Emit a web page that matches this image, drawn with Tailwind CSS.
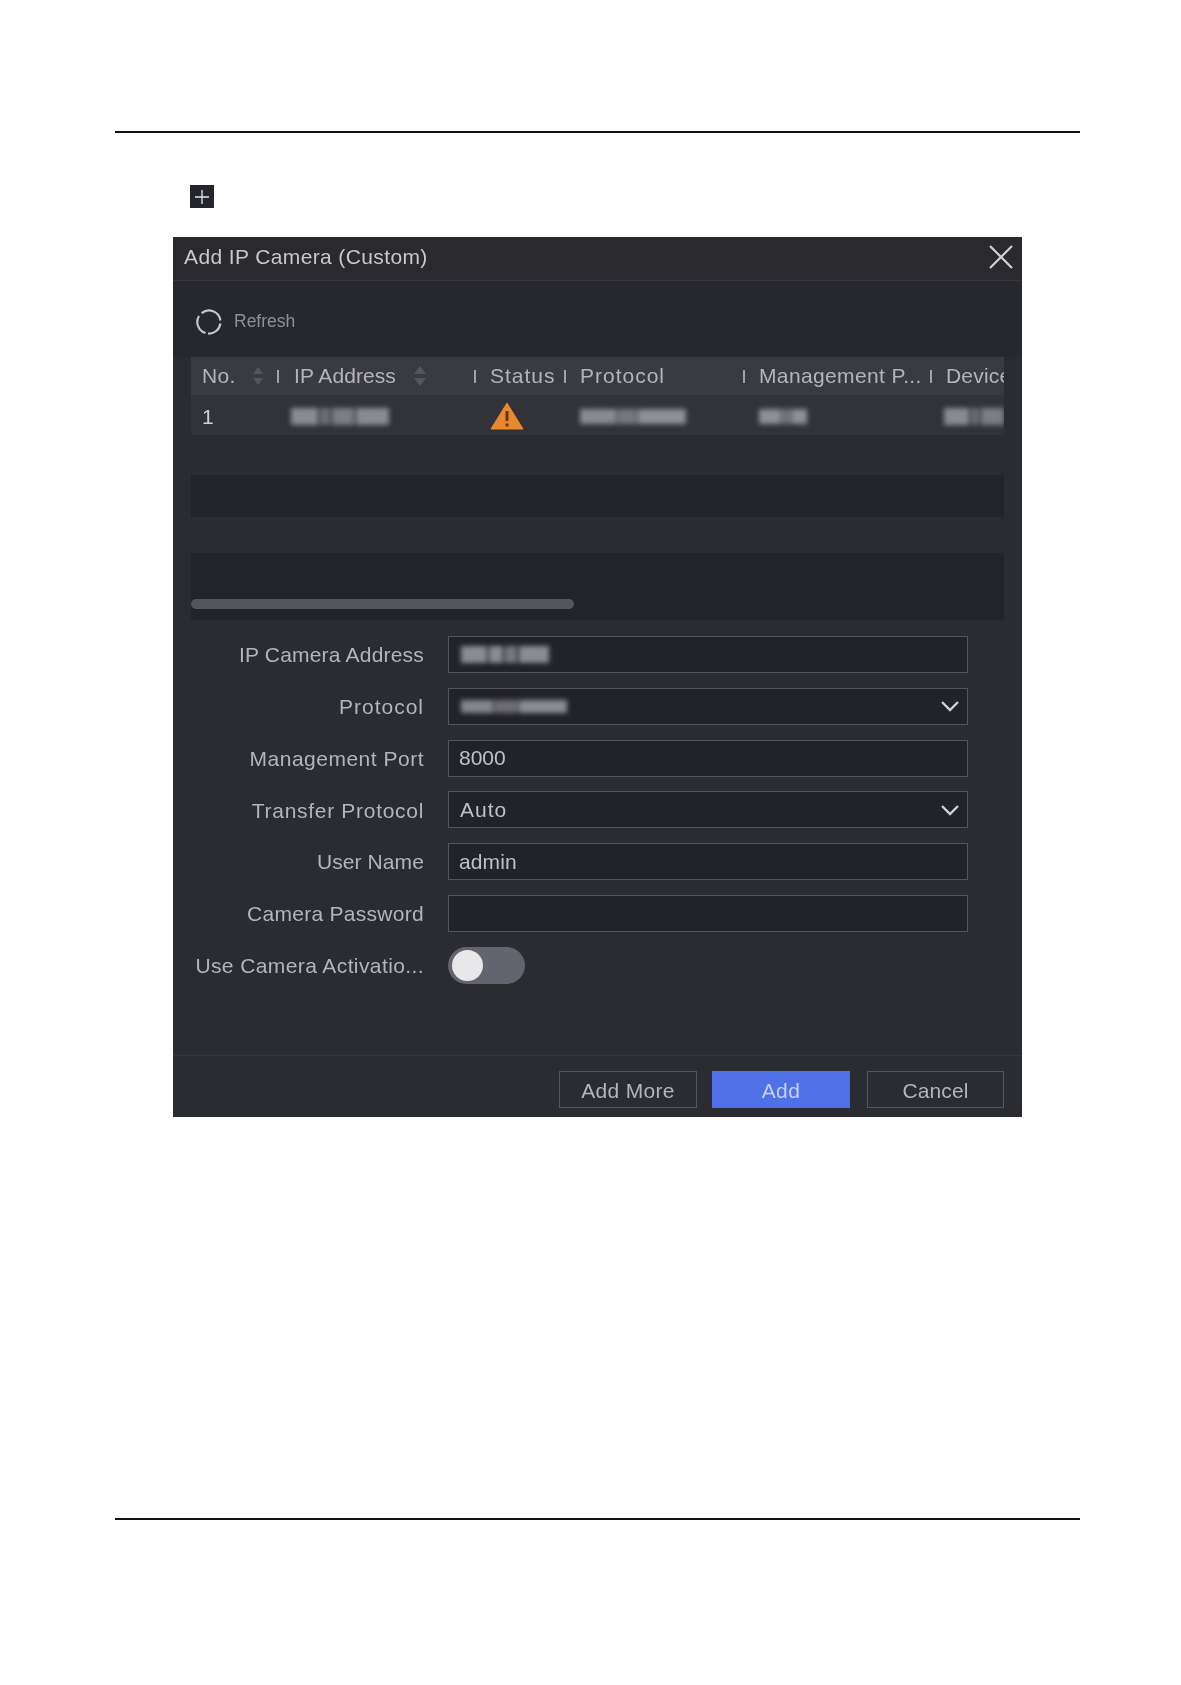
<!DOCTYPE html>
<html lang="en">
<head>
    <meta charset="UTF-8">
    <title>Add IP Camera (Custom)</title>
    <script src="https://cdn.jsdelivr.net/npm/@tailwindcss/browser@4"></script>
</head>
<body class="bg-[#fefefe] font-['Liberation_Sans',Arial,sans-serif]">
    <div class="h-[1685px] w-[1181px] overflow-hidden pt-[131px]">
        <!-- Top rule -->
        <div class="ml-[115px] h-[2px] w-[965px] bg-[#111]"></div>

        <!-- Plus icon -->
        <div class="ml-[190px] mt-[52px] flex h-[23px] w-[24px] items-center justify-center bg-[#23252d]">
            <svg width="16" height="16" viewBox="0 0 16 16" fill="none" stroke="#e8e8ea" stroke-width="1.3"><path d="M1 8h14M8 1v14"/></svg>
        </div>

        <!-- Dialog -->
        <div class="ml-[173px] mt-[29px] flex h-[880px] w-[849px] flex-col bg-[#2b2c31] text-[#b4b5b8] blur-[0.4px]">
            <div class="flex h-[44px] shrink-0 items-center justify-between border-b border-[#35363b] bg-[#29292e] pl-[11px] pr-[8px]">
                <span class="-mt-[4px] text-[21px] tracking-[0.38px] text-[#c8c9cb]">Add IP Camera (Custom)</span>
                <svg class="-mt-[4px]" width="26" height="26" viewBox="0 0 26 26" fill="none" stroke="#d0d1d3" stroke-width="2.2"><path d="M2 2l22 22M24 2L2 24"/></svg>
            </div>

            <div class="flex flex-1 flex-col">
                <!-- Refresh -->
                <div class="flex h-[76px] shrink-0 items-center bg-[#27282d] pl-[22px] pt-[5px]">
                    <svg width="28" height="28" viewBox="0 0 28 28" fill="none" stroke="#c4c5c8" stroke-width="2.2"><path d="M6.6 5.2A11.5 11.5 0 0 1 25.4 12.5"/><path d="M25.4 15.5A11.5 11.5 0 0 1 13 25.5"/><path d="M10.5 25A11.5 11.5 0 0 1 4 8"/></svg>
                    <span class="ml-[11px] text-[17.5px] text-[#8f9095]">Refresh</span>
                </div>

                <!-- Table -->
                <div class="mx-[18px] h-[263px] shrink-0 overflow-hidden text-[21px]">
                    <div class="flex h-[38px] items-center bg-[#3a3b40] text-[#b4b5b8]">
                        <div class="flex w-[86px] shrink-0 items-center pl-[11px]">
                            <span class="tracking-[0.3px]">No.</span>
                            <svg class="ml-[16px]" width="12" height="20" viewBox="0 0 12 20" fill="#55565b"><path d="M6 1l5 7H1zM6 19l5-7H1z"/></svg>
                        </div>
                        <div class="flex w-[197px] shrink-0 items-center">
                            <i class="h-[13px] w-[2px] bg-[#a0a1a5]"></i>
                            <span class="ml-[15px] tracking-[0.07px]">IP Address</span>
                            <svg class="ml-[17px]" width="14" height="22" viewBox="0 0 14 22" fill="#55565b"><path d="M7 1l6 8H1zM7 21l6-8H1z"/></svg>
                        </div>
                        <div class="flex w-[90px] shrink-0 items-center">
                            <i class="h-[13px] w-[2px] bg-[#a0a1a5]"></i>
                            <span class="ml-[14px] tracking-[1px]">Status</span>
                        </div>
                        <div class="flex w-[179px] shrink-0 items-center">
                            <i class="h-[13px] w-[2px] bg-[#a0a1a5]"></i>
                            <span class="ml-[14px] tracking-[1px]">Protocol</span>
                        </div>
                        <div class="flex w-[187px] shrink-0 items-center">
                            <i class="h-[13px] w-[2px] bg-[#a0a1a5]"></i>
                            <span class="ml-[14px] tracking-[0.37px]">Management P...</span>
                        </div>
                        <div class="flex min-w-0 flex-1 items-center overflow-hidden whitespace-nowrap">
                            <i class="h-[13px] w-[2px] shrink-0 bg-[#a0a1a5]"></i>
                            <span class="ml-[14px] tracking-[0.2px]">Device</span>
                        </div>
                    </div>
                    <div class="flex h-[40px] items-center bg-[#323339] pt-[3px]">
                        <div class="w-[86px] shrink-0 pl-[11px] text-[#d0d1d3]">1</div>
                        <div class="w-[197px] shrink-0 pl-[14px]">
                            <div class="flex h-[17px] w-[98px] gap-[2px] blur-[2.5px]">
                                <i class="w-[28px] bg-[#8a8b90]"></i><i class="w-[10px] bg-[#6d6e73]"></i><i class="w-[22px] bg-[#7d7e83]"></i><i class="w-[34px] bg-[#8a8b90]"></i>
                            </div>
                        </div>
                        <div class="-mt-[2px] w-[90px] shrink-0 pl-[16px]">
                            <svg width="34" height="28" viewBox="0 0 34 28"><path d="M17 1L33 27H1z" fill="#e8872b" stroke="#e8872b" stroke-linejoin="round"/><path d="M17 9v10" stroke="#5c3a17" stroke-width="3"/><circle cx="17" cy="23" r="1.7" fill="#5c3a17"/></svg>
                        </div>
                        <div class="w-[179px] shrink-0 pl-[16px]">
                            <div class="flex h-[15px] w-[106px] gap-[1px] blur-[2.5px]">
                                <i class="w-[36px] bg-[#8a8b90]"></i><i class="w-[20px] bg-[#77787d]"></i><i class="w-[48px] bg-[#8f9095]"></i>
                            </div>
                        </div>
                        <div class="w-[187px] shrink-0 pl-[16px]">
                            <div class="flex h-[15px] w-[48px] gap-[1px] blur-[2.5px]">
                                <i class="w-[22px] bg-[#8f9095]"></i><i class="w-[8px] bg-[#77787d]"></i><i class="w-[16px] bg-[#8f9095]"></i>
                            </div>
                        </div>
                        <div class="flex-1 pl-[14px]">
                            <div class="flex h-[17px] w-[60px] gap-[2px] blur-[2.5px]">
                                <i class="w-[26px] bg-[#8a8b90]"></i><i class="w-[8px] bg-[#6d6e73]"></i><i class="w-[24px] bg-[#7d7e83]"></i>
                            </div>
                        </div>
                    </div>
                    <div class="h-[40px]"></div>
                    <div class="h-[42px] bg-[#22232b]"></div>
                    <div class="h-[36px]"></div>
                    <div class="h-[67px] bg-[#22232b]"></div>
                </div>

                <!-- Scrollbar, drawn over the last table row -->
                <div class="relative h-0">
                    <div class="absolute left-[18px] top-[-21px] h-[10px] w-[383px] rounded-full bg-[#55555d]"></div>
                </div>

                <!-- Form -->
                <div class="mt-[16px] flex flex-col gap-[14.8px] text-[21px]">
                    <div class="flex h-[37px] items-center">
                        <label class="w-[251px] shrink-0 pt-[1px] text-right tracking-[0.2px]">IP Camera Address</label>
                        <div class="ml-[24px] flex h-full w-[520px] items-center border border-[#55565c] bg-[#22232a] pl-[12px]">
                            <div class="flex h-[17px] w-[94px] gap-[2px] blur-[2.5px]">
                                <i class="w-[26px] bg-[#8b8c91]"></i><i class="w-[14px] bg-[#8b8c91]"></i><i class="w-[12px] bg-[#77787d]"></i><i class="w-[30px] bg-[#8b8c91]"></i>
                            </div>
                        </div>
                    </div>
                    <div class="flex h-[37px] items-center">
                        <label class="w-[251px] shrink-0 pt-[1px] text-right tracking-[1px]">Protocol</label>
                        <div class="ml-[24px] flex h-full w-[520px] items-center justify-between border border-[#55565c] bg-[#22232a] pl-[12px] pr-[7px]">
                            <div class="flex h-[13px] w-[106px] gap-[1px] blur-[2.5px]">
                                <i class="w-[32px] bg-[#85868b]"></i><i class="w-[24px] bg-[#6d6e73]"></i><i class="w-[48px] bg-[#8b8c91]"></i>
                            </div>
                            <svg width="20" height="12" viewBox="0 0 20 12" fill="none" stroke="#d0d1d3" stroke-width="2.4"><path d="M2 2l8 8 8-8"/></svg>
                        </div>
                    </div>
                    <div class="flex h-[37px] items-center">
                        <label class="w-[251px] shrink-0 pt-[1px] text-right tracking-[0.5px]">Management Port</label>
                        <div class="ml-[24px] flex h-full w-[520px] items-center border border-[#55565c] bg-[#22232a] pl-[10px] text-[#c0c1c4]">8000</div>
                    </div>
                    <div class="flex h-[37px] items-center">
                        <label class="w-[251px] shrink-0 pt-[1px] text-right tracking-[0.7px]">Transfer Protocol</label>
                        <div class="ml-[24px] flex h-full w-[520px] items-center justify-between border border-[#55565c] bg-[#22232a] pl-[11px] pr-[7px] text-[#c0c1c4]">
                            <span class="tracking-[1px]">Auto</span>
                            <svg width="20" height="12" viewBox="0 0 20 12" fill="none" stroke="#d0d1d3" stroke-width="2.4"><path d="M2 2l8 8 8-8"/></svg>
                        </div>
                    </div>
                    <div class="flex h-[37px] items-center">
                        <label class="w-[251px] shrink-0 pt-[1px] text-right tracking-[0.1px]">User Name</label>
                        <div class="ml-[24px] flex h-full w-[520px] items-center border border-[#55565c] bg-[#22232a] pl-[10px] tracking-[0.1px] text-[#c0c1c4]">admin</div>
                    </div>
                    <div class="flex h-[37px] items-center">
                        <label class="w-[251px] shrink-0 pt-[1px] text-right tracking-[0.28px]">Camera Password</label>
                        <div class="ml-[24px] h-full w-[520px] border border-[#55565c] bg-[#22232a]"></div>
                    </div>
                    <div class="flex h-[37px] items-center">
                        <label class="w-[251px] shrink-0 pt-[1px] text-right tracking-[0.4px]">Use Camera Activatio...</label>
                        <div class="ml-[24px] flex h-full w-[77px] items-center rounded-full bg-[#63646d] pl-[4px]">
                            <div class="h-[31px] w-[31px] rounded-full bg-[#e8e8ea]"></div>
                        </div>
                    </div>
                </div>
            </div>

            <!-- Footer -->
            <div class="flex h-[62px] shrink-0 justify-end border-t border-[#35363b] pr-[18px] pt-[15px] text-[21px]">
                <button class="h-[37px] w-[138px] border border-[#55565c] pt-[2px] tracking-[0.3px] text-[#b4b5b8]">Add More</button>
                <button class="ml-[15px] h-[37px] w-[138px] bg-[#5070e8] pt-[2px] tracking-[0.4px] text-[#c8d0f2]">Add</button>
                <button class="ml-[17px] h-[37px] w-[137px] border border-[#55565c] pt-[2px] tracking-[0.1px] text-[#b4b5b8]">Cancel</button>
            </div>
        </div>

        <!-- Bottom rule -->
        <div class="ml-[115px] mt-[401px] h-[2px] w-[965px] bg-[#111]"></div>
    </div>
</body>
</html>
